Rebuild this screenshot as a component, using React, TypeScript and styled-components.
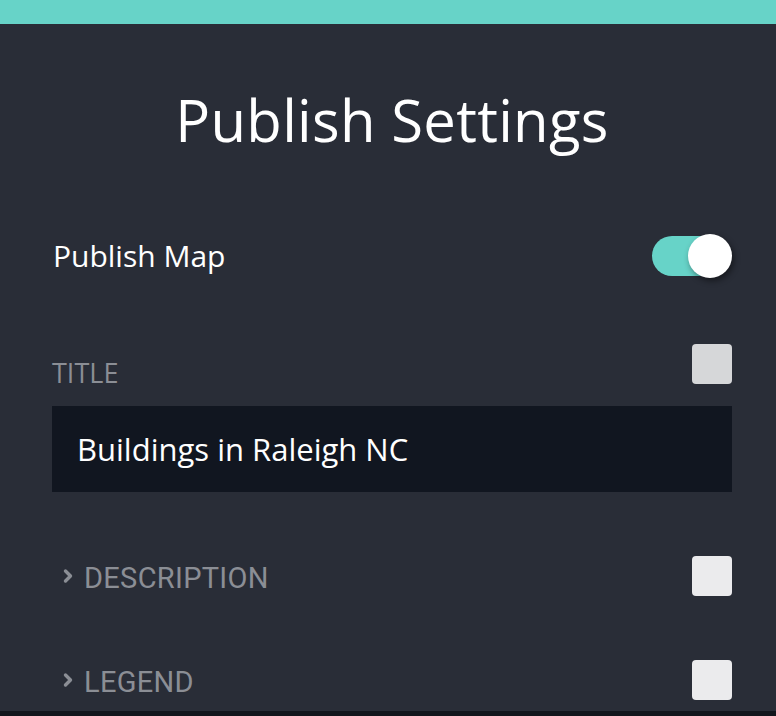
import React, { useState } from "react";
import styled, { createGlobalStyle } from "styled-components";

const GlobalStyle = createGlobalStyle`
  html, body {
    margin: 0;
    padding: 0;
    background: #12151c;
  }
  * {
    box-sizing: border-box;
  }
`;

const Page = styled.div`
  width: 776px;
  height: 716px;
  display: flex;
  flex-direction: column;
  overflow: hidden;
  background: #12151c;
  font-family: "Open Sans", "Noto Sans", sans-serif;
`;

const TopBar = styled.div`
  height: 24px;
  flex: none;
  background: #67d3c8;
`;

const Panel = styled.div`
  height: 687px;
  flex: none;
  background: #292d37;
  padding: 0 44px 0 52px;
  display: flex;
  flex-direction: column;
`;

const Heading = styled.h1`
  margin: 56px 0 0;
  text-align: center;
  color: #ffffff;
  font-weight: 400;
  font-size: 58px;
  line-height: 80px;
  letter-spacing: 0.3px;
`;

const ToggleRow = styled.div`
  margin-top: 74px;
  display: flex;
  align-items: center;
  justify-content: space-between;
  height: 44px;
`;

const ToggleLabel = styled.span`
  color: #ffffff;
  font-size: 30px;
  line-height: 44px;
  padding-left: 1px;
`;

const Switch = styled.button<{ $on: boolean }>`
  position: relative;
  width: 80px;
  height: 44px;
  border: 0;
  padding: 0;
  background: transparent;
  cursor: pointer;

  &::before {
    content: "";
    position: absolute;
    left: 0;
    top: 2px;
    width: 78px;
    height: 40px;
    border-radius: 20px;
    background: ${(p) => (p.$on ? "#67d3c8" : "#4a4f5c")};
  }
`;

const Knob = styled.span<{ $on: boolean }>`
  position: absolute;
  top: 0;
  left: ${(p) => (p.$on ? "36px" : "0")};
  width: 44px;
  height: 44px;
  border-radius: 50%;
  background: #ffffff;
  box-shadow: 2px 3px 6px rgba(0, 0, 0, 0.45);
`;

const FieldHeader = styled.div<{ $top: number }>`
  margin-top: ${(p) => p.$top}px;
  display: flex;
  align-items: center;
  justify-content: space-between;
  height: 40px;
`;

const FieldLabel = styled.span`
  display: flex;
  align-items: center;
  gap: 10px;
  color: #8b8e95;
  font-family: "Roboto", "Liberation Sans", sans-serif;
  font-size: 29px;
  letter-spacing: 0.3px;
  text-transform: uppercase;
  transform: translateY(2px);
`;

const TitleLabel = styled(FieldLabel)`
  font-family: "Open Sans", sans-serif;
  font-size: 27px;
  letter-spacing: 0;
  transform: translateY(8px);
`;

const Chevron = styled.svg`
  width: 12px;
  height: 16px;
  margin-left: 10px;
  margin-top: -4px;
`;

const Check = styled.span<{ $tone: string }>`
  width: 40px;
  height: 40px;
  border-radius: 4px;
  background: ${(p) => p.$tone};
`;

const TextInput = styled.input`
  margin-top: 22px;
  width: 680px;
  height: 86px;
  border: 0;
  outline: none;
  background: #111620;
  color: #ffffff;
  padding: 0 25px;
  font-family: "Open Sans", "Noto Sans", sans-serif;
  font-size: 31px;
`;

const BottomStrip = styled.div`
  flex: 1;
  background: #12151c;
`;

const ChevronIcon = () => (
  <Chevron viewBox="0 0 12 16">
    <path
      d="M3.5 3l5 5-5 5"
      fill="none"
      stroke="#8b8e95"
      strokeWidth="3.4"
      strokeLinecap="round"
      strokeLinejoin="round"
    />
  </Chevron>
);

export default function App() {
  const [published, setPublished] = useState(true);
  const [title, setTitle] = useState("Buildings in Raleigh NC");

  return (
    <Page>
      <GlobalStyle />
      <TopBar />
      <Panel>
        <Heading>Publish Settings</Heading>
        <ToggleRow>
          <ToggleLabel>Publish Map</ToggleLabel>
          <Switch $on={published} onClick={() => setPublished(!published)}>
            <Knob $on={published} />
          </Switch>
        </ToggleRow>

        <FieldHeader $top={66}>
          <TitleLabel>Title</TitleLabel>
          <Check $tone="#d6d7d9" />
        </FieldHeader>
        <TextInput value={title} onChange={(e) => setTitle(e.target.value)} />

        <FieldHeader $top={64}>
          <FieldLabel>
            <ChevronIcon />
            Description
          </FieldLabel>
          <Check $tone="#ebebed" />
        </FieldHeader>

        <FieldHeader $top={64}>
          <FieldLabel>
            <ChevronIcon />
            Legend
          </FieldLabel>
          <Check $tone="#ebebed" />
        </FieldHeader>
      </Panel>
      <BottomStrip />
    </Page>
  );
}
